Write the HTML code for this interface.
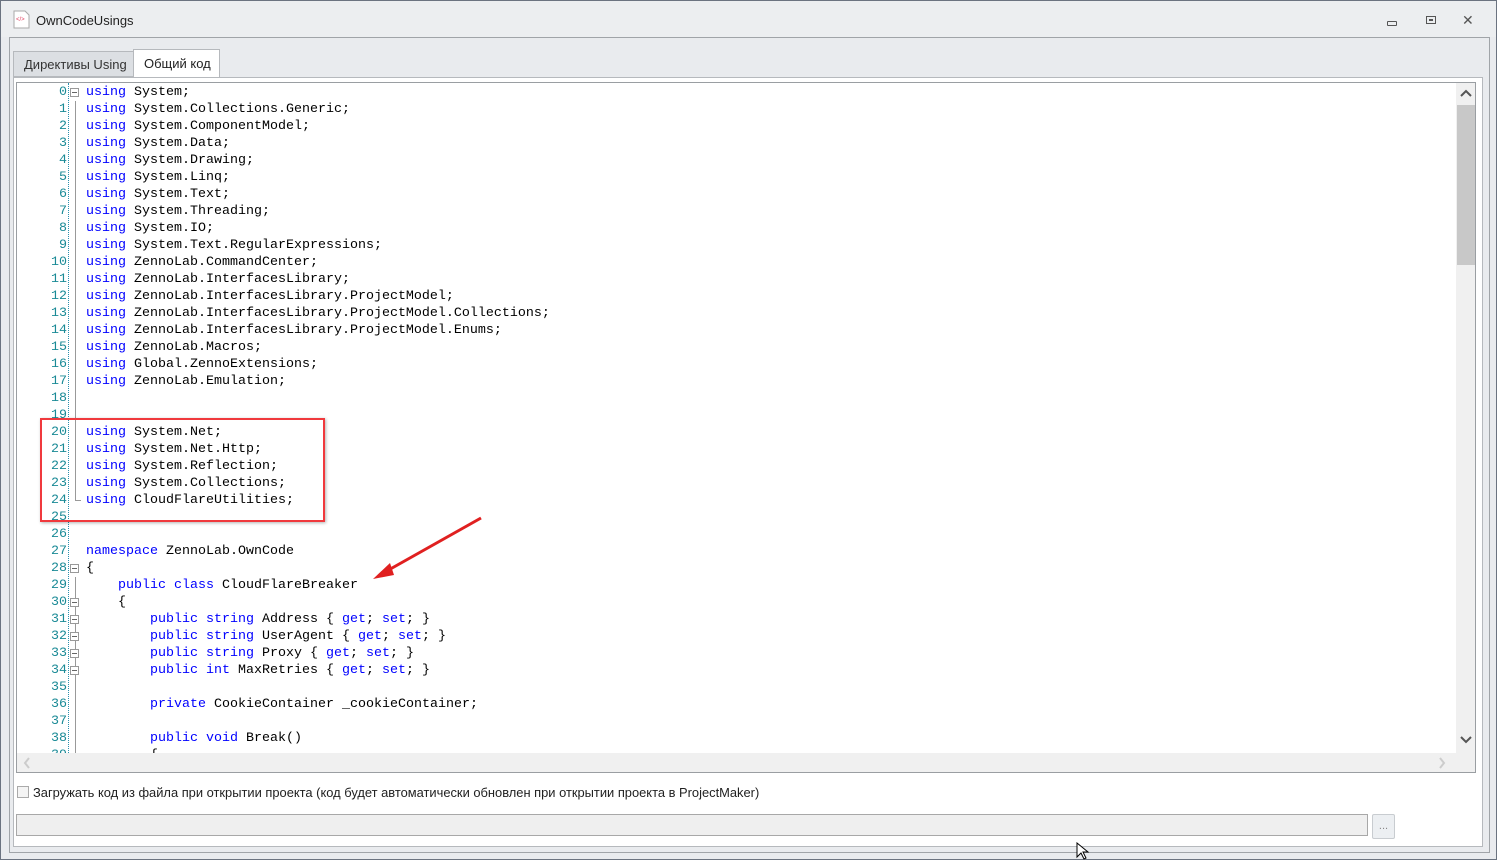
<!DOCTYPE html>
<html><head><meta charset="utf-8"><style>
*{margin:0;padding:0;box-sizing:border-box}
body{width:1497px;height:860px;background:#e9ebee;position:relative;overflow:hidden;font-family:"Liberation Sans",sans-serif}
.abs{position:absolute}
.code{font-family:"Liberation Mono",monospace;font-size:13.33px;line-height:17px;white-space:pre;color:#000}
.k{color:#0000ff}
.ln{position:absolute;left:0;width:50px;text-align:right;font-family:"Liberation Mono",monospace;font-size:13.33px;line-height:17px;color:#1a8a96}
.fb{position:absolute;left:70px;width:9px;height:9px;border:1px solid #999;background:#fff}
.fb:after{content:"";position:absolute;left:1px;top:3px;width:5px;height:1px;background:#666}
</style></head><body>
<div class="abs" style="left:0;top:0;width:1497px;height:860px;border:1px solid #6b7380"></div>
<div class="abs" style="left:1px;top:1px;width:1495px;height:36px;background:#eceef0"></div>
<svg class="abs" style="left:13px;top:10px" width="18" height="20"><path d="M1 1h11l4 4v13H1z" fill="#fff" stroke="#aaa"/><text x="3" y="11" font-size="6" fill="#e04060" font-family="Liberation Sans">&lt;/&gt;</text></svg>
<div class="abs" style="left:36px;top:13px;font-size:13px;color:#222">OwnCodeUsings</div>
<div class="abs" style="left:1387px;top:21px;width:10px;height:5px;border:1px solid #555;border-radius:1px"></div>
<div class="abs" style="left:1426px;top:16px;width:10px;height:8px;border:1px solid #555"><div style="margin:2px 2px;width:4px;height:2px;background:#555"></div></div>
<div class="abs" style="left:1462px;top:12px;font-size:14px;color:#555">✕</div>
<div class="abs" style="left:9px;top:37px;width:1481px;height:816px;border:1px solid #a0a4a8;background:#e9ebee"></div>
<div class="abs" style="left:13px;top:51px;width:121px;height:26px;background:#dcdfe3;border:1px solid #b6b9bd;font-size:13px;color:#333;padding:5px 0 0 10px">Директивы Using</div>
<div class="abs" style="left:133px;top:49px;width:87px;height:29px;background:#fff;border:1px solid #b6b9bd;border-bottom:none;font-size:13px;color:#222;padding:6px 0 0 10px">Общий код</div>
<div class="abs" style="left:13px;top:77px;width:1470px;height:770px;background:#fff;border:1px solid #b6b9bd"></div>
<div class="abs" style="left:16px;top:82px;width:1460px;height:691px;border:1px solid #9a9ea2;background:#fff;overflow:hidden">
<div class="abs" style="left:51px;top:0;height:670px;border-left:1px dotted #2b91af"></div>
<div class="abs" style="left:58px;top:18px;width:6px;height:400px;border-left:1px solid #999;border-bottom:1px solid #999"></div>
<div class="abs" style="left:58px;top:494px;height:180px;border-left:1px solid #999"></div>
<div class="abs" style="left:0;top:1px">
<div class="ln" style="top:0">0</div><div class="ln" style="top:17px">1</div><div class="ln" style="top:34px">2</div><div class="ln" style="top:51px">3</div><div class="ln" style="top:68px">4</div><div class="ln" style="top:85px">5</div><div class="ln" style="top:102px">6</div><div class="ln" style="top:119px">7</div><div class="ln" style="top:136px">8</div><div class="ln" style="top:153px">9</div><div class="ln" style="top:170px">10</div><div class="ln" style="top:187px">11</div><div class="ln" style="top:204px">12</div><div class="ln" style="top:221px">13</div><div class="ln" style="top:238px">14</div><div class="ln" style="top:255px">15</div><div class="ln" style="top:272px">16</div><div class="ln" style="top:289px">17</div><div class="ln" style="top:306px">18</div><div class="ln" style="top:323px">19</div><div class="ln" style="top:340px">20</div><div class="ln" style="top:357px">21</div><div class="ln" style="top:374px">22</div><div class="ln" style="top:391px">23</div><div class="ln" style="top:408px">24</div><div class="ln" style="top:425px">25</div><div class="ln" style="top:442px">26</div><div class="ln" style="top:459px">27</div><div class="ln" style="top:476px">28</div><div class="ln" style="top:493px">29</div><div class="ln" style="top:510px">30</div><div class="ln" style="top:527px">31</div><div class="ln" style="top:544px">32</div><div class="ln" style="top:561px">33</div><div class="ln" style="top:578px">34</div><div class="ln" style="top:595px">35</div><div class="ln" style="top:612px">36</div><div class="ln" style="top:629px">37</div><div class="ln" style="top:646px">38</div><div class="ln" style="top:663px">39</div>
</div>
<div class="fb" style="left:53px;top:5px"></div><div class="fb" style="left:53px;top:481px"></div><div class="fb" style="left:53px;top:515px"></div><div class="fb" style="left:53px;top:532px"></div><div class="fb" style="left:53px;top:549px"></div><div class="fb" style="left:53px;top:566px"></div><div class="fb" style="left:53px;top:583px"></div>
<div class="abs code" style="left:69px;top:1px"><span class="k">using</span> System;
<span class="k">using</span> System.Collections.Generic;
<span class="k">using</span> System.ComponentModel;
<span class="k">using</span> System.Data;
<span class="k">using</span> System.Drawing;
<span class="k">using</span> System.Linq;
<span class="k">using</span> System.Text;
<span class="k">using</span> System.Threading;
<span class="k">using</span> System.IO;
<span class="k">using</span> System.Text.RegularExpressions;
<span class="k">using</span> ZennoLab.CommandCenter;
<span class="k">using</span> ZennoLab.InterfacesLibrary;
<span class="k">using</span> ZennoLab.InterfacesLibrary.ProjectModel;
<span class="k">using</span> ZennoLab.InterfacesLibrary.ProjectModel.Collections;
<span class="k">using</span> ZennoLab.InterfacesLibrary.ProjectModel.Enums;
<span class="k">using</span> ZennoLab.Macros;
<span class="k">using</span> Global.ZennoExtensions;
<span class="k">using</span> ZennoLab.Emulation;


<span class="k">using</span> System.Net;
<span class="k">using</span> System.Net.Http;
<span class="k">using</span> System.Reflection;
<span class="k">using</span> System.Collections;
<span class="k">using</span> CloudFlareUtilities;


<span class="k">namespace</span> ZennoLab.OwnCode
{
    <span class="k">public class</span> CloudFlareBreaker
    {
        <span class="k">public string</span> Address { <span class="k">get</span>; <span class="k">set</span>; }
        <span class="k">public string</span> UserAgent { <span class="k">get</span>; <span class="k">set</span>; }
        <span class="k">public string</span> Proxy { <span class="k">get</span>; <span class="k">set</span>; }
        <span class="k">public int</span> MaxRetries { <span class="k">get</span>; <span class="k">set</span>; }

        <span class="k">private</span> CookieContainer _cookieContainer;

        <span class="k">public void</span> Break()
        {</div>
<div class="abs" style="left:1439px;top:0;width:20px;height:670px;background:#f0f0f0"></div>
<div class="abs" style="left:1440px;top:22px;width:18px;height:160px;background:#c8c8c8"></div>
<svg class="abs" style="left:1442px;top:5px" width="14" height="10"><path d="M2 8L7 3L12 8" stroke="#555" stroke-width="2" fill="none"/></svg>
<svg class="abs" style="left:1442px;top:652px" width="14" height="10"><path d="M2 2L7 7L12 2" stroke="#555" stroke-width="2" fill="none"/></svg>
<div class="abs" style="left:0;top:670px;width:1458px;height:20px;background:#f0f0f0"></div>
<svg class="abs" style="left:5px;top:673px" width="10" height="14"><path d="M7 2L3 7L7 12" stroke="#ccc" stroke-width="2" fill="none"/></svg>
<svg class="abs" style="left:1420px;top:673px" width="10" height="14"><path d="M3 2L7 7L3 12" stroke="#ccc" stroke-width="2" fill="none"/></svg>
</div>
<div class="abs" style="left:40px;top:418px;width:285px;height:104px;border:2px solid #f0393d;box-shadow:1px 1px 3px rgba(0,0,0,.3)"></div>
<svg class="abs" style="left:0;top:0" width="1497" height="860"><path d="M481 518L385 572" stroke="#e02020" stroke-width="3"/><path d="M373 579L390 563L394 575Z" fill="#e02020"/></svg>
<div class="abs" style="left:17px;top:786px;width:12px;height:12px;border:1px solid #aaa;background:#f4f4f4"></div>
<div class="abs" style="left:33px;top:785px;font-size:12.9px;color:#222">Загружать код из файла при открытии проекта (код будет автоматически обновлен при открытии проекта в ProjectMaker)</div>
<div class="abs" style="left:16px;top:814px;width:1352px;height:22px;border:1px solid #a8a8a8;background:#efefef"></div>
<div class="abs" style="left:1372px;top:814px;width:23px;height:25px;border:1px solid #c8ccd0;border-radius:2px;background:#eceff2;font-size:11px;color:#888;text-align:center;line-height:22px">...</div>
<svg class="abs" style="left:1076px;top:842px" width="14" height="18"><path d="M1 1V15L5 11L8 17L10 16L7 10H12Z" fill="#fff" stroke="#000"/></svg>
</body></html>
